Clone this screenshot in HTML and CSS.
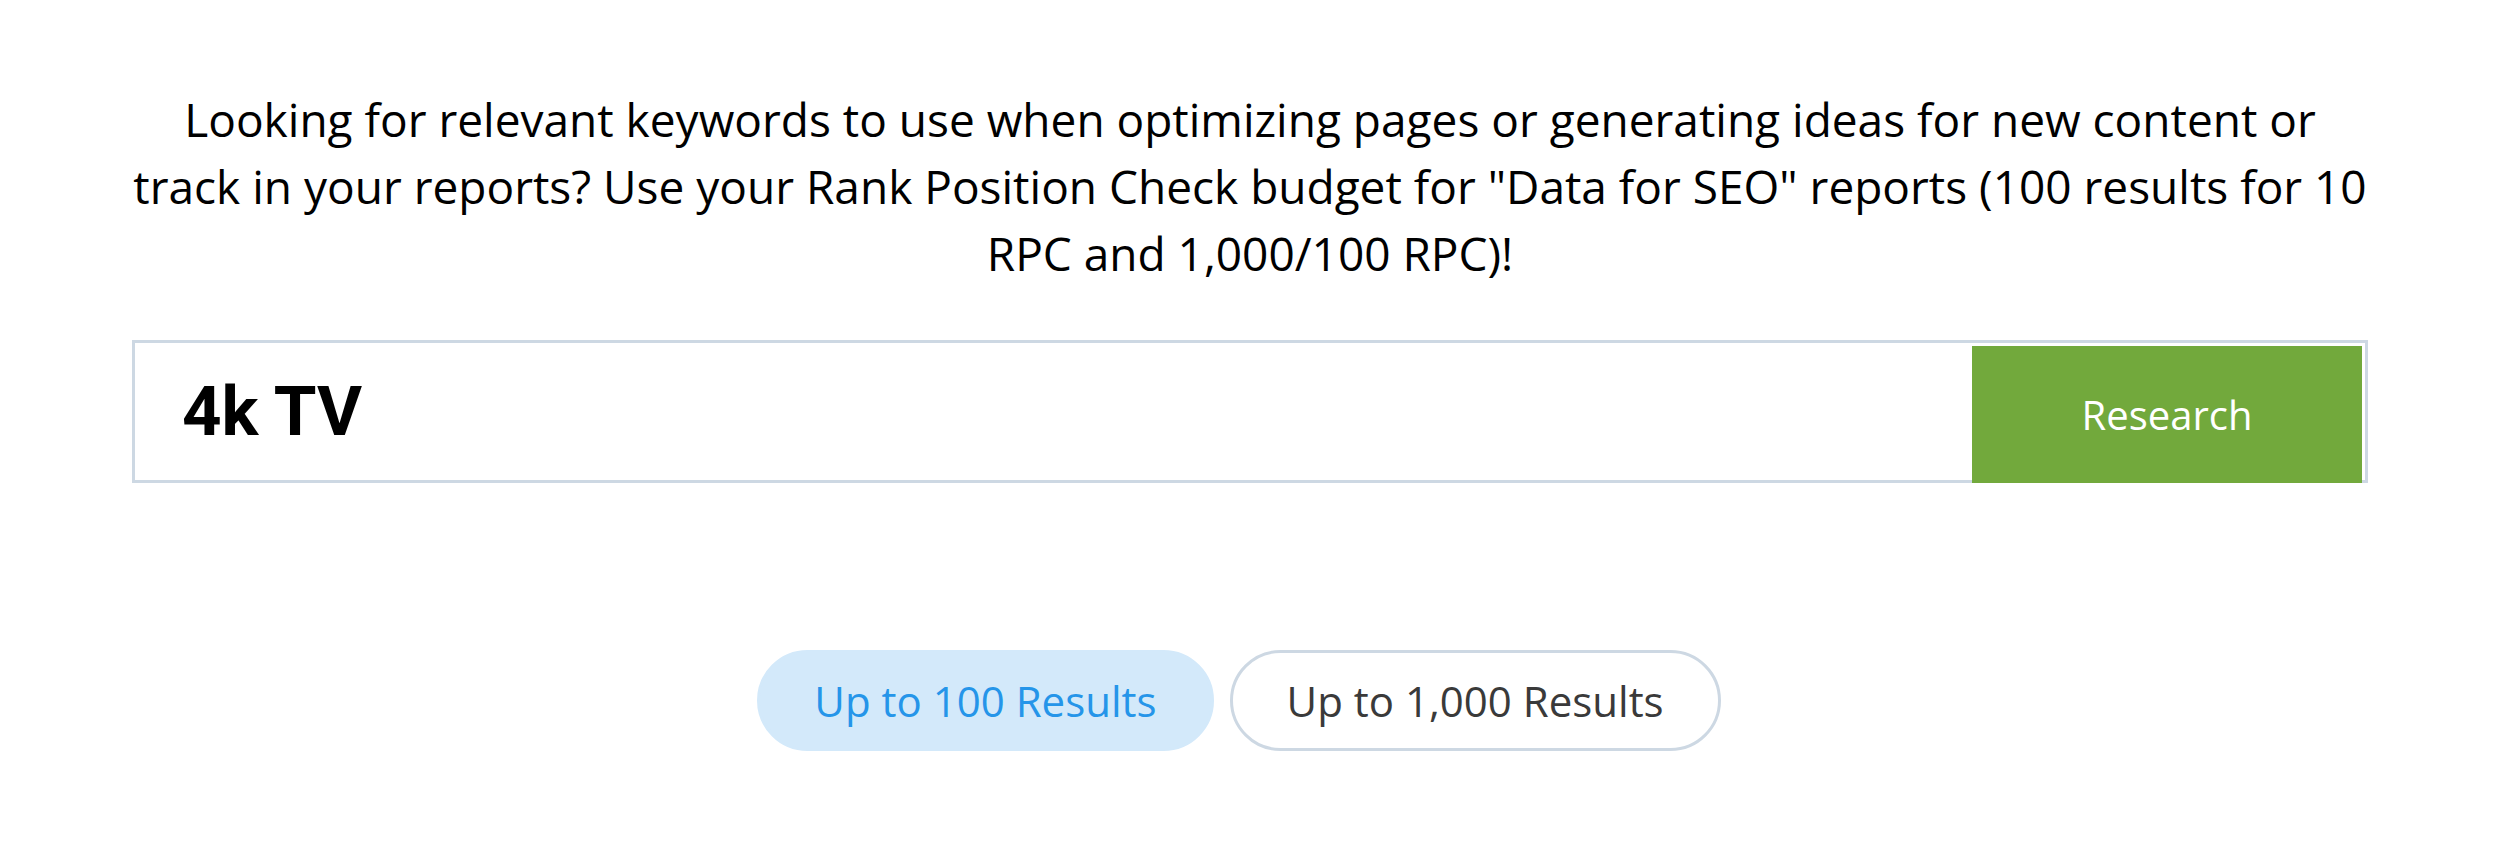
FILE: index.html
```html
<!DOCTYPE html>
<html>
<head>
<meta charset="utf-8">
<link rel="stylesheet" href="styles.css">
</head>
<body>
<div class="wrap">
  <p class="intro">Looking for relevant keywords to use when optimizing pages or generating ideas for new content or track in your reports? Use your Rank Position Check budget for "Data for SEO" reports (100 results for 10 RPC and 1,000/100 RPC)!</p>
  <div class="search">
    <div class="query">4k TV</div>
    <button class="research">Research</button>
  </div>
  <div class="options">
    <button class="pill active">Up to 100 Results</button>
    <button class="pill">Up to 1,000 Results</button>
  </div>
</div>
</body>
</html>
```

FILE: styles.css
```css
html, body {
  margin: 0;
  padding: 0;
  background: #ffffff;
}
body {
  font-family: "Open Sans", sans-serif;
}
.wrap {
  width: 2236px;
  margin: 0 auto;
  padding-top: 86px;
}
.intro {
  margin: 0;
  text-align: center;
  font-size: 46px;
  line-height: 67px;
  color: #000;
}
.search {
  margin-top: 53px;
  height: 143px;
  box-sizing: border-box;
  border: 3px solid #cdd8e3;
  display: flex;
  align-items: stretch;
}
.query {
  flex: 1;
  display: flex;
  align-items: center;
  padding-left: 47px;
  font-family: "Roboto", "Liberation Sans", sans-serif;
  font-weight: bold;
  font-size: 69px;
  color: #000;
}
.research {
  width: 390px;
  margin: 3px 3px -3px 0;
  border: 0;
  background: #72a93c;
  color: #fff;
  font-family: "Open Sans", sans-serif;
  font-size: 40px;
  padding: 0;
}
.options {
  margin-top: 167px;
  padding-right: 22px;
  display: flex;
  justify-content: center;
  gap: 16px;
}
.pill {
  height: 101px;
  border-radius: 51px;
  font-family: "Open Sans", sans-serif;
  font-size: 42px;
  padding: 0 54px;
  box-sizing: border-box;
  background: #fff;
  border: 3px solid #cdd8e3;
  color: #3a3a3a;
}
.pill.active {
  background: #d3e9fa;
  border-color: #d3e9fa;
  color: #2595e9;
}
```
